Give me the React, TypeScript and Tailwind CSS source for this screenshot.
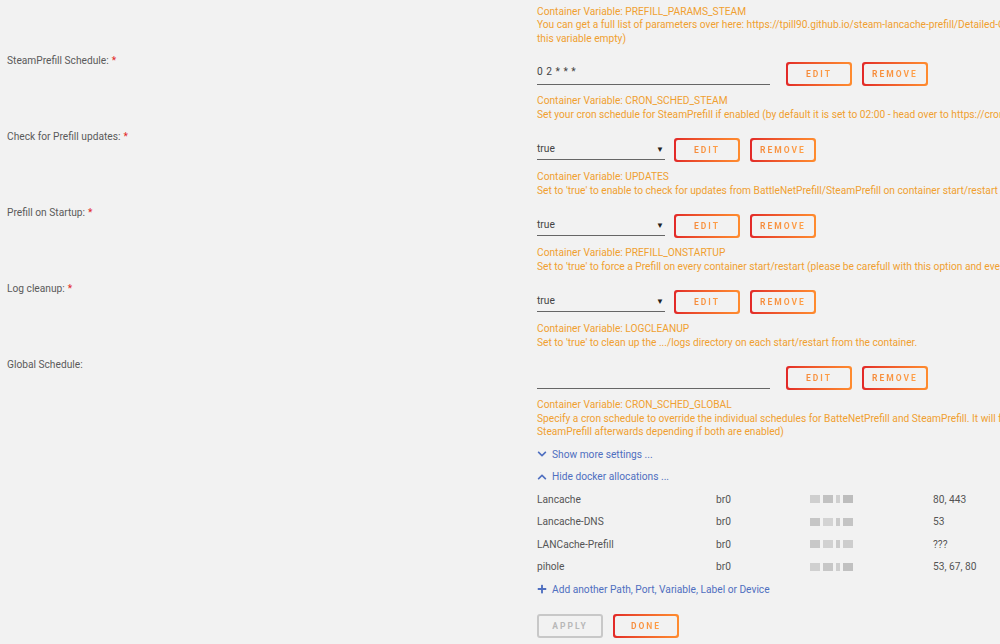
import { FaChevronDown, FaChevronUp, FaPlus } from 'react-icons/fa'

type Setting = {
  label: string
  required: boolean
  kind: 'input' | 'select'
  value: string
  variable: string
  help: string[]
}

const settings: Setting[] = [
  {
    label: 'SteamPrefill Schedule:',
    required: true,
    kind: 'input',
    value: '0 2 * * *',
    variable: 'CRON_SCHED_STEAM',
    help: [
      'Set your cron schedule for SteamPrefill if enabled (by default it is set to 02:00 - head over to https://crontab.guru/ for more information)',
    ],
  },
  {
    label: 'Check for Prefill updates:',
    required: true,
    kind: 'select',
    value: 'true',
    variable: 'UPDATES',
    help: [
      "Set to 'true' to enable to check for updates from BattleNetPrefill/SteamPrefill on container start/restart",
    ],
  },
  {
    label: 'Prefill on Startup:',
    required: true,
    kind: 'select',
    value: 'true',
    variable: 'PREFILL_ONSTARTUP',
    help: [
      "Set to 'true' to force a Prefill on every container start/restart (please be carefull with this option and eventually disable it)",
    ],
  },
  {
    label: 'Log cleanup:',
    required: true,
    kind: 'select',
    value: 'true',
    variable: 'LOGCLEANUP',
    help: ["Set to 'true' to clean up the .../logs directory on each start/restart from the container."],
  },
  {
    label: 'Global Schedule:',
    required: false,
    kind: 'input',
    value: '',
    variable: 'CRON_SCHED_GLOBAL',
    help: [
      'Specify a cron schedule to override the individual schedules for BatteNetPrefill and SteamPrefill. It will first run BattleNetPrefill and',
      'SteamPrefill afterwards depending if both are enabled)',
    ],
  },
]

const allocations = [
  { name: 'Lancache', net: 'br0', ports: '80, 443', ip: ['#cfcfcf', '#c2c2c2', '#d0d0d0', '#bdbdbd'] },
  { name: 'Lancache-DNS', net: 'br0', ports: '53', ip: ['#c6c6c6', '#d3d3d3', '#cacaca', '#c4c4c4'] },
  { name: 'LANCache-Prefill', net: 'br0', ports: '???', ip: ['#c8c8c8', '#d1d1d1', '#cbcbcb', '#cdcdcd'] },
  { name: 'pihole', net: 'br0', ports: '53, 67, 80', ip: ['#d0d0d0', '#c7c7c7', '#cecece', '#c1c1c1'] },
]

const ipWidths = [10, 10, 4, 10]

function GradientButton({ children, disabled }: { children: string; disabled?: boolean }) {
  if (disabled) {
    return (
      <div className="flex h-[24px] w-[66px] items-center justify-center rounded-[3px] border-2 border-[#c8c8c8]">
        <span className="text-[8.5px] font-bold tracking-[2px] text-[#b8b8b8]">{children}</span>
      </div>
    )
  }
  return (
    <div className="rounded-[3px] bg-gradient-to-r from-[#e22828] to-[#ff8c2f] p-[2px]">
      <div className="flex h-[20px] w-[62px] items-center justify-center rounded-[2px] bg-[#f2f2f2]">
        <span className="bg-gradient-to-r from-[#f58a3a] to-[#ffa048] bg-clip-text text-[8.5px] font-bold tracking-[2px] text-transparent">
          {children}
        </span>
      </div>
    </div>
  )
}

function HelpLines({ lines }: { lines: string[] }) {
  return (
    <div className="text-[#f0a030]">
      {lines.map((line) => (
        <div key={line} className="whitespace-nowrap leading-[13.5px]">
          {line}
        </div>
      ))}
    </div>
  )
}

function SettingRow({ s }: { s: Setting }) {
  return (
    <div className="grid min-h-[76px] grid-cols-[537px_1fr]">
      <div className="pl-[7px] leading-[13px] text-[#5a5a5a]">
        {s.label}
        {s.required && <span className="ml-[3px] text-[#e22828]">*</span>}
      </div>
      <div>
        <div className="flex items-start pt-[8px]">
          {s.kind === 'input' ? (
            <div className="mr-[16px] flex h-[23px] w-[233px] items-end border-b border-[#666] pb-[5px] text-[#444]">
              <span className="tracking-[0.5px]">{s.value}</span>
            </div>
          ) : (
            <div className="mr-[9px] flex h-[22px] w-[128px] items-end justify-between border-b border-[#666] pb-[3px] text-[#444]">
              <span>{s.value}</span>
              <span className="pr-[1px] text-[8px] text-[#222]">▼</span>
            </div>
          )}
          <div className="flex gap-[10px]">
            <GradientButton>EDIT</GradientButton>
            <GradientButton>REMOVE</GradientButton>
          </div>
        </div>
        <div className="mt-[8px]">
          <HelpLines lines={[`Container Variable: ${s.variable}`, ...s.help]} />
        </div>
      </div>
    </div>
  )
}

function BlurredIp({ shades }: { shades: string[] }) {
  return (
    <div className="flex items-center gap-[3px] blur-[0.5px]">
      {shades.map((c, i) => (
        <div key={i} className="h-[8px]" style={{ width: ipWidths[i], backgroundColor: c }} />
      ))}
    </div>
  )
}

export default function App() {
  return (
    <div
      className="h-[644px] w-[1000px] overflow-hidden bg-[#f2f2f2] text-[10.2px]"
      style={{ fontFamily: 'Roboto, "Liberation Sans", sans-serif' }}
    >
      <div className="grid grid-cols-[537px_1fr] pb-[9px] pt-[4.5px]">
        <div />
        <HelpLines
          lines={[
            'Container Variable: PREFILL_PARAMS_STEAM',
            "You can get a full list of parameters over here: https://tpill90.github.io/steam-lancache-prefill/Detailed-Command-Usage/ (if you don't need any parameters leave",
            'this variable empty)',
          ]}
        />
      </div>

      {settings.map((s) => (
        <SettingRow key={s.variable} s={s} />
      ))}

      <div className="mt-[4.5px] grid grid-cols-[537px_1fr]">
        <div />
        <div>
          <div className="flex h-[22.5px] items-center gap-[5px] text-[#4f6fc0]">
            <FaChevronDown className="h-[10px] w-[10px]" />
            <span>Show more settings ...</span>
          </div>
          <div className="flex h-[22.5px] items-center gap-[5px] text-[#4f6fc0]">
            <FaChevronUp className="h-[10px] w-[10px]" />
            <span>Hide docker allocations ...</span>
          </div>
          {allocations.map((a) => (
            <div key={a.name} className="grid h-[22.5px] grid-cols-[179px_94px_123px_1fr] items-center text-[#555]">
              <span>{a.name}</span>
              <span>{a.net}</span>
              <BlurredIp shades={a.ip} />
              <span>{a.ports}</span>
            </div>
          ))}
          <div className="flex h-[22.5px] items-center gap-[5px] text-[#4f6fc0]">
            <FaPlus className="h-[10px] w-[10px]" />
            <span>Add another Path, Port, Variable, Label or Device</span>
          </div>
          <div className="mt-[13.5px] flex gap-[10px]">
            <GradientButton disabled>APPLY</GradientButton>
            <GradientButton>DONE</GradientButton>
          </div>
        </div>
      </div>
    </div>
  )
}
